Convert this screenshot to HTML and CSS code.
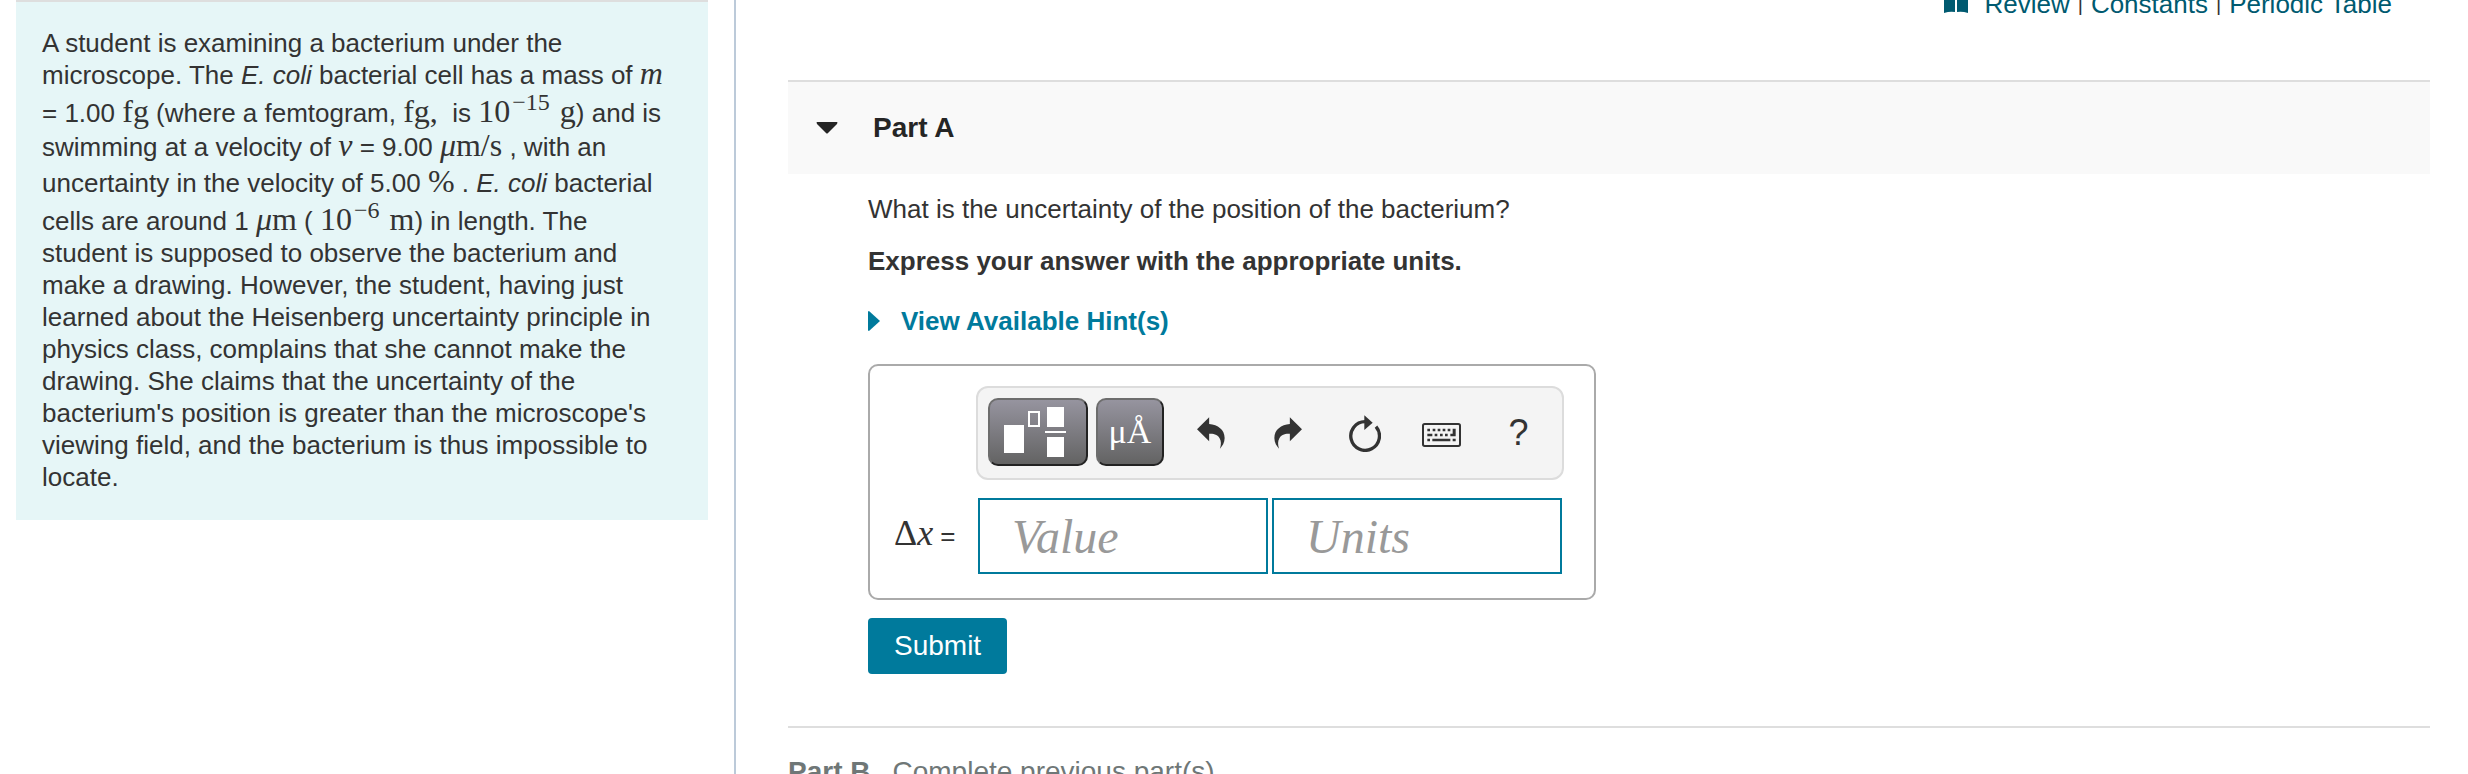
FILE: index.html
```html
<!DOCTYPE html>
<html lang="en">
  <head>
    <meta charset="UTF-8" />
    <meta name="viewport" content="width=device-width, initial-scale=1" />
    <title>Part A</title>
    <link rel="stylesheet" href="styles.css">
  </head>
  <body>
    <div class="page">
      <aside class="sidebar">
        <div class="problem">
          A student is examining a bacterium under the microscope. The
          <i>E. coli</i> bacterial cell has a mass of
          <span class="math"><i>m</i></span> = 1.00
          <span class="math">fg</span> (where a femtogram,
          <span class="math">fg,</span>&nbsp; is
          <span class="math power">10<sup>−15</sup>&nbsp;g</span>) and is
          swimming at a velocity of <span class="math"><i>v</i></span> = 9.00
          <span class="math unit"><i>μ</i>m/s</span> , with an uncertainty in
          the velocity of 5.00 <span class="math percent">%</span> .
          <i>E. coli</i> bacterial cells are around 1
          <span class="math"><i>μ</i>m</span> (
          <span class="math power">10<sup>−6</sup>&nbsp;m</span>) in length.
          The student is supposed to observe the bacterium and make a drawing.
          However, the student, having just learned about the Heisenberg
          uncertainty principle in physics class, complains that she cannot
          make the drawing. She claims that the uncertainty of the bacterium's
          position is greater than the microscope's viewing field, and the
          bacterium is thus impossible to locate.
        </div>
      </aside>

      <main class="content">
        <nav class="resources">
          <svg class="book" viewBox="0 0 24 24" aria-hidden="true">
            <path d="M0 1Q7-1 11 2V23Q6 22 0 24ZM13 2Q17-1 24 1V24Q18 22 13 23Z" />
          </svg>
          <a href="#review">Review</a>
          <span>|</span>
          <a href="#constants">Constants</a>
          <span>|</span>
          <a href="#periodic">Periodic Table</a>
        </nav>

        <section class="part">
          <h2 class="part-header">
            <svg class="caret" viewBox="0 0 22 12" aria-hidden="true">
              <path d="M1 0H21Q22 0 21 2L12 11Q11 12 10 11L1 2Q0 0 1 0Z" />
            </svg>
            Part A
          </h2>

          <div class="part-body">
            <p>What is the uncertainty of the position of the bacterium?</p>
            <p><b>Express your answer with the appropriate units.</b></p>
            <a class="hints" href="#hints">
              <svg class="hint-arrow" viewBox="0 0 12 20" aria-hidden="true">
                <path d="M0 1Q0 0 1 0L12 10L1 20Q0 20 0 19Z" />
              </svg>
              View Available Hint(s)
            </a>

            <form id="answerForm">
              <div class="answer-box">
                <div class="toolbar">
                  <button type="button" class="tool dark templates" aria-label="Templates">
                    <svg viewBox="0 0 62 52" aria-hidden="true">
                      <rect x="0" y="19" width="20" height="28" />
                      <rect class="hollow" x="25" y="6" width="10" height="14" />
                      <rect x="43" y="1" width="17" height="20" />
                      <rect x="41" y="25" width="21" height="2" />
                      <rect x="43" y="31" width="17" height="20" />
                    </svg>
                  </button>
                  <button type="button" class="tool dark symbols" aria-label="Symbols">μÅ</button>
                  <button type="button" class="tool" aria-label="Undo">
                    <svg class="arrow" viewBox="0 0 83 95" aria-hidden="true">
                      <path d="M0 36L36 1V21C62 23 82 38 82 62C82 76 75 86 68 94C72 82 72 72 67 63C60 51 48 50 36 50V72Z" />
                    </svg>
                  </button>
                  <button type="button" class="tool" aria-label="Redo">
                    <svg class="arrow" viewBox="0 0 83 95" aria-hidden="true">
                      <path d="M83 36L47 1V21C21 23 1 38 1 62C1 76 8 86 15 94C11 82 11 72 16 63C23 51 35 50 47 50V72Z" />
                    </svg>
                  </button>
                  <button type="button" class="tool" aria-label="Reset">
                    <svg class="reset" viewBox="0 0 96 111" aria-hidden="true">
                      <path class="ring" d="M81 35A43 43 0 1 1 48 20" />
                      <path d="M46 1L71 23L46 45Z" />
                    </svg>
                  </button>
                  <button type="button" class="tool" aria-label="Keyboard shortcuts">
                    <svg class="keyboard" viewBox="0 0 117 72" aria-hidden="true">
                      <rect class="frame" x="3" y="3" width="111" height="66" rx="5" />
                      <path d="M16 17h8v8h-8zM32 17h8v8h-8zM47 17h8v8h-8zM62 17h8v8h-8zM77 17h8v8h-8zM16 32h15v8H16zM38 32h8v8h-8zM54 32h8v8h-8zM69 32h8v8h-8zM92 17h9v23H85v-8h7zM16 47h8v8h-8zM31 47h54v8H31zM92 47h9v8h-9z" />
                    </svg>
                  </button>
                  <button type="button" class="tool help" aria-label="Help">?</button>
                </div>

                <div class="fields">
                  <label for="answerValue"><span class="math">Δ<i>x</i></span> =</label>
                  <input type="text" id="answerValue" placeholder="Value" />
                  <input type="text" id="answerUnits" placeholder="Units" aria-label="Units" />
                </div>
              </div>

              <button type="submit" class="submit">Submit</button>
            </form>
          </div>
        </section>

        <section class="part-locked">
          <b>Part B</b>
          <span>Complete previous part(s)</span>
        </section>
      </main>
    </div>
  </body>
</html>
```
FILE: styles.css
```css
/* Global Styles */
* {
  box-sizing: border-box;
}

body {
  margin: 0;
  height: 100vh;
  overflow: hidden;
  background-color: #fff;
  color: #333;
  font-family: "Liberation Sans", Arial, sans-serif;
  font-size: 26px;
  line-height: 32px;
}

.page {
  display: grid;
  grid-template-columns: minmax(400px, 736px) minmax(0, 1fr);
  min-height: 100vh;
}

/* Problem text */
.sidebar {
  padding: 0 26px 0 16px;
  border-right: 2px solid #bccad9;
}

.problem {
  padding: 25px 38px 27px 26px;
  border-top: 2px solid #dedede;
  background-color: #e6f6f7;
}

.math {
  display: inline-block;
  font-family: "Liberation Serif", "Times New Roman", serif;
  font-size: 32px;
  line-height: 26px;
}

.math sup {
  margin: 0 2px;
  font-size: 24px;
  line-height: 0;
  vertical-align: 12px;
}

.unit {
  padding-top: 3px;
}

.percent {
  padding-top: 5px;
}

.power {
  padding-top: 7px;
}

/* Resource links */
.content {
  padding: 0 38px 0 52px;
}

.resources {
  display: flex;
  justify-content: flex-end;
  gap: 8px;
  height: 32px;
  margin: -12px 38px 60px 0;
}

.resources a {
  color: #005a70;
  text-decoration: none;
}

.resources span {
  font-size: 20px;
}

.book {
  width: 24px;
  height: 24px;
  margin: 1px 8px 0 0;
  fill: #005a70;
}

/* Part A */
.part-header {
  display: flex;
  align-items: center;
  gap: 35px;
  height: 94px;
  margin: 0;
  padding-left: 28px;
  border-top: 2px solid #dedede;
  background-color: #f9f9f9;
  color: #252525;
  font-size: 28px;
}

.caret {
  width: 22px;
  height: 12px;
  fill: #252525;
}

.part-body {
  padding: 19px 0 52px 80px;
}

.part-body p {
  margin: 0 0 20px;
}

.part-body p + p {
  margin-bottom: 28px;
}

.hints {
  display: flex;
  align-items: center;
  gap: 21px;
  margin-bottom: 27px;
  color: #007a9c;
  font-weight: bold;
  text-decoration: none;
}

.hint-arrow {
  width: 12px;
  height: 20px;
  fill: #007a9c;
}

/* Answer box */
.answer-box {
  width: fit-content;
  padding: 20px 30px 24px 24px;
  border: 2px solid #aaa;
  border-radius: 10px;
}

.toolbar {
  display: flex;
  width: 588px;
  margin: 0 0 18px auto;
  padding: 10px 5px 10px 10px;
  border: 2px solid #dcdcdc;
  border-radius: 12px;
  background-color: #f4f4f4;
}

.tool {
  display: flex;
  align-items: center;
  justify-content: center;
  width: 77px;
  height: 70px;
  padding: 0;
  border: none;
  background: none;
  color: #333;
  cursor: pointer;
}

.tool svg {
  fill: #333;
}

.dark {
  width: 68px;
  height: 68px;
  margin-right: 8px;
  border: 2px solid;
  border-color: #6d6d6d #222 #222 #6d6d6d;
  border-radius: 10px;
  background: linear-gradient(#96949f, #636363);
  color: #fff;
}

.templates {
  width: 100px;
  padding-right: 6px;
}

.templates svg {
  width: 62px;
  height: 52px;
  fill: #fff;
}

.templates .hollow {
  fill: none;
  stroke: #fff;
  stroke-width: 2;
}

.symbols {
  font-family: "Liberation Serif", "Times New Roman", serif;
  font-size: 34px;
}

.arrow {
  width: 28px;
  height: 32px;
}

.reset {
  width: 32px;
  height: 37px;
}

.reset .ring {
  fill: none;
  stroke: #333;
  stroke-width: 10;
}

.keyboard {
  width: 39px;
  height: 24px;
  margin-top: 4px;
}

.keyboard .frame {
  fill: none;
  stroke: #333;
  stroke-width: 6;
}

.help {
  font-family: "Liberation Sans", Arial, sans-serif;
  font-size: 36px;
}

.fields {
  display: flex;
  align-items: center;
  gap: 4px;
  padding-right: 2px;
}

.fields label {
  width: 80px;
  white-space: nowrap;
}

.fields .math {
  font-size: 36px;
}

.fields input {
  width: 290px;
  height: 76px;
  padding: 0 32px;
  border: 2px solid #007a9c;
  border-radius: 0;
  font-family: "Liberation Serif", "Times New Roman", serif;
  font-size: 48px;
}

.fields input::placeholder {
  color: #999;
  font-style: italic;
}

.submit {
  display: block;
  height: 56px;
  margin-top: 18px;
  padding: 0 26px;
  border: none;
  border-radius: 4px;
  background-color: #007a9c;
  color: #fff;
  font-family: inherit;
  font-size: 28px;
  cursor: pointer;
}

/* Part B */
.part-locked {
  display: flex;
  gap: 22px;
  padding-top: 28px;
  border-top: 2px solid #dedede;
  color: #6f7777;
  font-size: 28px;
}
```
